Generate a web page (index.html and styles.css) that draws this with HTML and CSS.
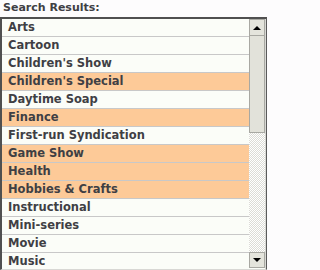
FILE: index.html
```html
<!DOCTYPE html>
<html>
<head>
<meta charset="utf-8">
<link rel="stylesheet" href="styles.css">
</head>
<body>
<div class="label">Search Results:</div>
<div class="box">
  <ul class="list">
    <li>Arts</li>
    <li>Cartoon</li>
    <li>Children's Show</li>
    <li class="sel">Children's Special</li>
    <li>Daytime Soap</li>
    <li class="sel">Finance</li>
    <li>First-run Syndication</li>
    <li class="sel">Game Show</li>
    <li class="sel">Health</li>
    <li class="sel">Hobbies &amp; Crafts</li>
    <li>Instructional</li>
    <li>Mini-series</li>
    <li>Movie</li>
    <li>Music</li>
  </ul>
  <div class="scrollbar">
    <div class="btn"><span class="arrow up"></span></div>
    <div class="thumb"></div>
    <div class="track"></div>
    <div class="btn down-btn"><span class="arrow down"></span></div>
  </div>
</div>
</body>
</html>
```

FILE: styles.css
```css
html, body {
  margin: 0;
  padding: 0;
  background: #fdfcfd;
  overflow: hidden;
}
body {
  width: 267px;
  height: 270px;
  font-family: "DejaVu Sans", Verdana, sans-serif;
  font-weight: bold;
  font-size: 11px;
  color: #3f3f44;
}
.label {
  height: 17px;
  line-height: 15px;
  padding-left: 3px;
  box-sizing: border-box;
}
.box {
  display: flex;
  height: 253px;
  box-sizing: border-box;
  border-top: 2px solid #505050;
  border-left: 2px solid #505050;
  border-right: 1px solid #5a5a5a;
  border-bottom: 1px solid #d8d8d4;
  background: #fbfdf8;
  overflow: hidden;
}
.list {
  list-style: none;
  margin: 0;
  padding: 0;
  width: 247px;
  flex: none;
  font-size: 11.5px;
}
.list li {
  height: 17px;
  line-height: 17px;
  padding-left: 6px;
  border-bottom: 1px solid #c8c8c8;
  white-space: nowrap;
}
.list li.sel {
  background: #fdca98;
}
.scrollbar {
  width: 17px;
  flex: none;
  display: flex;
  flex-direction: column;
  border-right: 1px solid #d8d8d4;
  box-sizing: border-box;
  background: #fbfdf8;
}
.btn {
  width: 16px;
  height: 17px;
  box-sizing: border-box;
  border: 1px solid #a8a8a2;
  background: #e4e4dc;
  display: flex;
  align-items: center;
  justify-content: center;
  flex: none;
}
.btn.down-btn {
  height: 16px;
  margin-bottom: 1px;
}
.arrow {
  width: 0;
  height: 0;
  border-left: 4px solid transparent;
  border-right: 4px solid transparent;
}
.arrow.up {
  border-bottom: 4px solid #000;
}
.arrow.down {
  border-top: 4px solid #000;
}
.thumb {
  width: 16px;
  height: 97px;
  box-sizing: border-box;
  border: 1px solid #a8a8a2;
  border-top: none;
  background: #e2e2da;
  flex: none;
}
.track {
  width: 16px;
  flex: 1;
  background: repeating-conic-gradient(#dcdcd6 0 25%, #ffffff 0 50%) 0 0 / 2px 2px;
}
```
